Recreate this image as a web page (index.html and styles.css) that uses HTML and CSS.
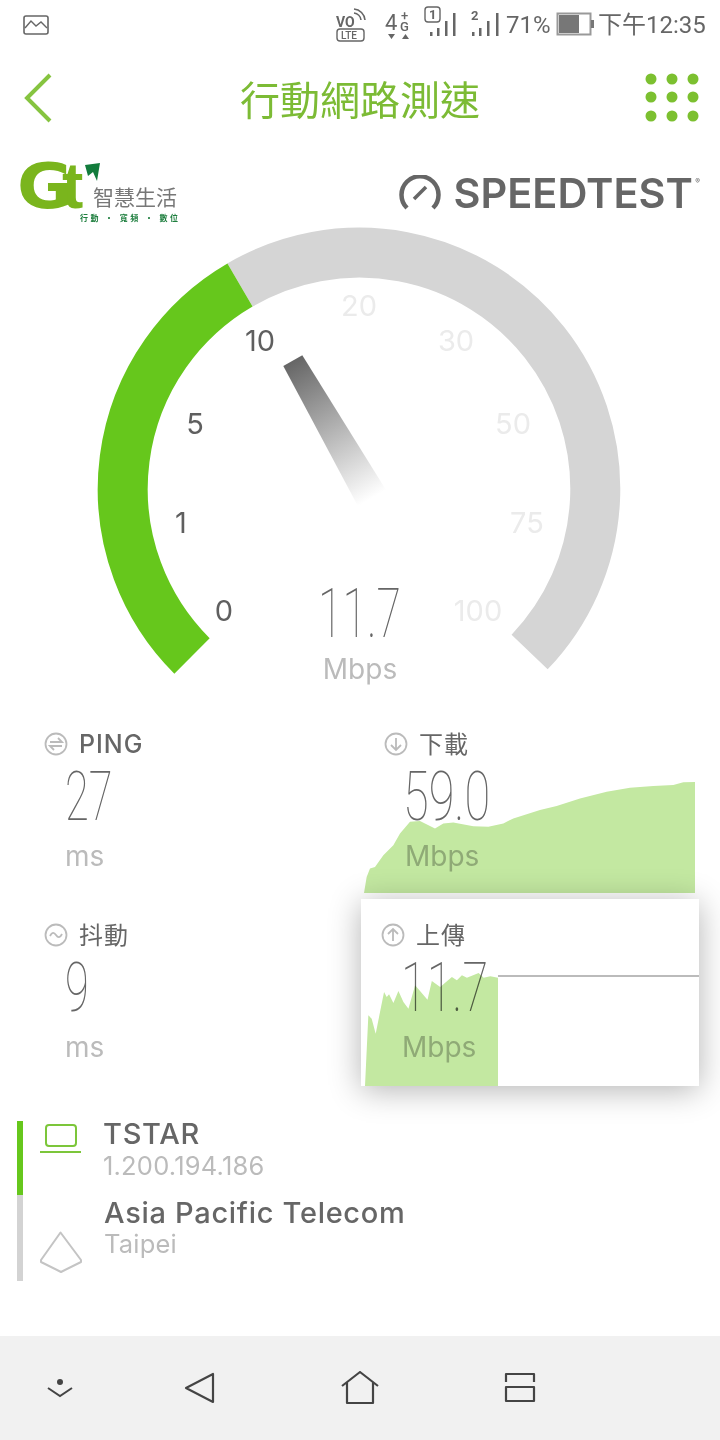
FILE: index.html
```html
<!DOCTYPE html>
<html lang="zh-Hant">
<head>
  <meta charset="UTF-8" />
  <meta name="viewport" content="width=device-width, initial-scale=1" />
  <title>行動網路測速</title>
  <link rel="stylesheet" href="styles.css">
</head>
<body>
  <div class="status-bar">
    <svg class="status-pic" width="26" height="22" viewBox="0 0 26 22">
      <rect x="1" y="2" width="24" height="18" rx="2" fill="none" stroke="#666" stroke-width="1.6"/>
      <path d="M2 14 L8 7 L13 12 L18 8 L24 14" fill="none" stroke="#666" stroke-width="1.4"/>
    </svg>
    <svg class="status-right" width="385" height="50" viewBox="330 0 385 50">
      <!-- volte -->
      <text x="336" y="27" class="st-small">VO</text>
      <path d="M354 13 a8 8 0 0 1 7 7 M354 9 a12 12 0 0 1 11 11" fill="none" stroke="#666" stroke-width="1.6"/>
      <rect x="337" y="29" width="27" height="12" rx="3" fill="none" stroke="#666" stroke-width="1.4"/>
      <text x="341" y="39" class="st-tiny">LTE</text>
      <!-- 4G -->
      <text x="385" y="30" class="st-4g">4</text>
      <text x="400" y="31" class="st-g">G</text>
      <text x="401" y="20" class="st-g">+</text>
      <path d="M388 34 h7 l-3.500 5 z M402 39 h7 l-3.500 -5 z" fill="#666"/>
      <!-- sim 1 -->
      <rect x="425" y="7" width="15" height="15" rx="3" fill="none" stroke="#666" stroke-width="1.400"/>
      <text x="429" y="19" class="st-sim">1</text>
      <g fill="#666">
        <rect x="430" y="32" width="2.500" height="4"/>
        <rect x="437" y="28" width="2.500" height="8"/>
        <rect x="445" y="21" width="2.500" height="15"/>
        <rect x="453" y="13" width="2.500" height="23"/>
      </g>
      <!-- sim 2 -->
      <text x="471" y="20" class="st-sim">2</text>
      <g fill="#666">
        <rect x="472" y="32" width="2.500" height="4"/>
        <rect x="479" y="28" width="2.500" height="8"/>
        <rect x="487" y="21" width="2.500" height="15"/>
        <rect x="496" y="13" width="2.500" height="23"/>
      </g>
      <text x="506" y="33" class="st-time">71%</text>
      <!-- battery -->
      <rect x="557.500" y="13.500" width="33" height="21" fill="none" stroke="#999" stroke-width="2"/>
      <rect x="559" y="15" width="20" height="18" fill="#777"/>
      <rect x="591" y="20" width="3" height="8" fill="#777"/>
      <text x="598" y="33" class="st-time">下午12:35</text>
    </svg>
  </div>

  <div class="top-bar">
    <svg width="32" height="52" viewBox="0 0 32 52">
      <path d="M28 3 L5 26 L28 49" fill="none" stroke="#86c440" stroke-width="4"/>
    </svg>
    <h1 class="page-title">行動網路測速</h1>
    <svg class="grid-icon" width="54" height="50" viewBox="0 0 54 50">
      <g fill="#7cc030">
        <circle cx="6" cy="6" r="5.500"/><circle cx="27" cy="6" r="5.500"/><circle cx="48" cy="6" r="5.500"/>
        <circle cx="6" cy="24" r="5.500"/><circle cx="27" cy="24" r="5.500"/><circle cx="48" cy="24" r="5.500"/>
        <circle cx="6" cy="43" r="5.500"/><circle cx="27" cy="43" r="5.500"/><circle cx="48" cy="43" r="5.500"/>
      </g>
    </svg>
  </div>

  <div class="brand-row">
    <svg class="gt-logo" width="170" height="76" viewBox="15 150 170 76">
      <text x="17" y="208" class="gt-mark" textLength="56" lengthAdjust="spacingAndGlyphs">G</text>
      <text x="62" y="208" class="gt-mark-t">t</text>
      <path d="M85 165 L100 163 L97 181 L93 172 L88 176 Z" fill="#127c3c"/>
      <text x="93" y="205" class="gt-name">智慧生活</text>
      <text x="80" y="221" class="gt-tag" textLength="98">行動 ‧ 寬頻 ‧ 數位</text>
    </svg>
    <div class="speedtest">
      <svg width="42" height="36" viewBox="0 0 42 36">
        <path d="M8 33 A18.500 18.500 0 1 1 34 33" fill="none" stroke="#666" stroke-width="4.500"/>
        <path d="M15 24 L27 12" stroke="#666" stroke-width="3.500"/>
      </svg>
      <span class="speedtest-name">SPEEDTEST</span>
      <span class="speedtest-reg">®</span>
    </div>
  </div>

  <svg class="gauge" width="720" height="503" viewBox="0 222 720 503">
    <defs>
      <linearGradient id="needleFade" gradientUnits="userSpaceOnUse" x1="293" y1="361" x2="372" y2="498">
        <stop offset="0" stop-color="#666"/>
        <stop offset="1" stop-color="#fff"/>
      </linearGradient>
    </defs>
    <path d="M240 285 A236 236 0 0 1 529.600 652" fill="none" stroke="#d5d5d5" stroke-width="50"/>
    <path d="M192 656 A236 236 0 0 1 240 285" fill="none" stroke="#66c71c" stroke-width="50"/>
    <polygon points="283.300,366 302.300,355.300 386,490 358.300,506.700" fill="url(#needleFade)"/>

    <g class="tick tick-on">
      <text x="224" y="621">0</text>
      <text x="181" y="533">1</text>
      <text x="195" y="434">5</text>
      <text x="260" y="351">10</text>
    </g>
    <g class="tick tick-off">
      <text x="359" y="316">20</text>
      <text x="456" y="351">30</text>
      <text x="513" y="434">50</text>
      <text x="527" y="533">75</text>
      <text x="478" y="621">100</text>
    </g>
    <text x="318" y="637" class="gauge-value" textLength="83" lengthAdjust="spacingAndGlyphs">11.7</text>
    <text x="360" y="679" class="gauge-unit">Mbps</text>
  </svg>

  <div class="stats">
    <div class="stat">
      <div class="stat-label">
        <svg width="24" height="24" viewBox="0 0 24 24">
          <circle cx="12" cy="12" r="10.500" class="ring"/>
          <path d="M6 10 H18 L14 6 M18 14 H6 L10 18" class="ring"/>
        </svg>
        <span>PING</span>
      </div>
      <div class="stat-value"><span>27</span></div>
      <div class="stat-unit">ms</div>
    </div>

    <div class="stat stat-down">
      <div class="stat-label">
        <svg width="24" height="24" viewBox="0 0 24 24">
          <circle cx="12" cy="12" r="10.500" class="ring"/>
          <path d="M12 6 V18 M7 13 L12 18 L17 13" class="ring"/>
        </svg>
        <span class="cjk">下載</span>
      </div>
      <div class="stat-value"><span>59.0</span></div>
      <div class="stat-unit">Mbps</div>
      <svg class="chart chart-down" width="331" height="111" viewBox="72 186 993 332" preserveAspectRatio="none">
        <polygon fill="#c3e8a1" points="72,518 80,470 90,445 105,440 130,405 160,375 180,340 210,305 240,303 285,325 310,310 340,307 400,318 445,320 490,310 520,295 600,270 650,258 720,235 800,215 870,203 940,198 1000,195 1030,187 1065,186 1065,518"/>
      </svg>
    </div>

    <div class="stat">
      <div class="stat-label">
        <svg width="24" height="24" viewBox="0 0 24 24">
          <circle cx="12" cy="12" r="10.500" class="ring"/>
          <path d="M6 13 C8 9 10 9 12 12 C14 15 16 15 18 11" class="ring"/>
        </svg>
        <span class="cjk">抖動</span>
      </div>
      <div class="stat-value"><span>9</span></div>
      <div class="stat-unit">ms</div>
    </div>

    <div class="stat stat-up">
      <div class="stat-label">
        <svg width="24" height="24" viewBox="0 0 24 24">
          <circle cx="12" cy="12" r="10.500" class="ring"/>
          <path d="M12 18 V6 M7 11 L12 6 L17 11" class="ring"/>
        </svg>
        <span class="cjk">上傳</span>
      </div>
      <div class="stat-value"><span>11.7</span></div>
      <div class="stat-unit">Mbps</div>
      <svg class="chart chart-up" width="133" height="113" viewBox="75 758 398 339" preserveAspectRatio="none">
        <polygon fill="#c3e8a1" points="75,1097 85,885 95,895 107,940 118,885 132,815 140,830 147,822 160,848 175,812 190,845 205,865 225,795 262,838 275,782 300,800 335,770 350,780 365,765 380,772 415,758 430,772 450,768 473,772 473,1097"/>
      </svg>
      <div class="chart-line"></div>
    </div>
  </div>

  <div class="isp-list">
    <div class="isp isp-client">
      <svg width="44" height="32" viewBox="0 0 44 32">
        <rect x="7" y="2" width="30" height="21" rx="3" fill="none" stroke="#7cc63a" stroke-width="2"/>
        <path d="M1 29 H42" stroke="#7cc63a" stroke-width="2"/>
      </svg>
      <div>
        <div class="isp-name">TSTAR</div>
        <div class="isp-sub">1.200.194.186</div>
      </div>
    </div>
    <div class="isp isp-server">
      <svg width="44" height="42" viewBox="0 0 44 42">
        <path d="M21.500 1.500 L42 29 L42 31 L22 41 L2 31 L2 29 Z" fill="none" stroke="#c4c4c4" stroke-width="2" stroke-linejoin="round"/>
      </svg>
      <div>
        <div class="isp-name">Asia Pacific Telecom</div>
        <div class="isp-sub">Taipei</div>
      </div>
    </div>
  </div>

  <div class="nav-bar">
    <svg width="28" height="24" viewBox="0 0 28 24">
      <circle cx="14" cy="6" r="3" fill="#444"/>
      <path d="M2 12 L14 20 L26 12" fill="none" stroke="#444" stroke-width="2"/>
    </svg>
    <svg width="32" height="32" viewBox="0 0 32 32">
      <path d="M29 2 V30 L2 16 Z" fill="none" stroke="#444" stroke-width="2.200" stroke-linejoin="round"/>
    </svg>
    <svg width="38" height="34" viewBox="0 0 38 34">
      <path d="M1 15 L19 1 L37 15 M6 11 V32 H32 V11" fill="none" stroke="#444" stroke-width="2.200" stroke-linejoin="round"/>
    </svg>
    <svg width="32" height="32" viewBox="0 0 32 32">
      <path d="M2 10 V2 H30 V10 M2 15 H30 V29 H2 Z" fill="none" stroke="#444" stroke-width="2.200" stroke-linejoin="round"/>
    </svg>
  </div>
</body>
</html>
```

FILE: styles.css
```css
html, body { margin: 0; padding: 0; }
body { width: 720px; height: 1440px; background: #fff; font-family: Inter, "Noto Sans CJK TC", sans-serif; position: relative; overflow: hidden; }
svg { display: block; }

.status-bar { height: 50px; display: flex; justify-content: space-between; padding: 0 5px 0 23px; box-sizing: border-box; }
.status-pic { margin-top: 14px; }
.st-small { font: 700 14px "Roboto", sans-serif; fill: #666; }
.st-tiny { font: 500 10px "Roboto", sans-serif; fill: #666; }
.st-4g { font: 400 22px "Roboto", sans-serif; fill: #666; }
.st-g { font: 500 13px "Roboto", sans-serif; fill: #666; }
.st-sim { font: 700 13px "Roboto", sans-serif; fill: #666; }
.st-time { font: 400 24px "Roboto", "Noto Sans CJK TC", sans-serif; fill: #666; }

.top-bar { height: 96px; display: grid; grid-template-columns: 1fr auto 1fr; align-items: center; padding: 0 22px; box-sizing: border-box; }
.page-title { margin: 0; font: 400 40px "Noto Sans CJK TC", sans-serif; color: #7cbb35; }
.grid-icon { justify-self: end; margin-right: -1px; }

.brand-row { height: 76px; display: flex; justify-content: space-between; padding: 0 27px 0 15px; box-sizing: border-box; }
.gt-logo { margin-top: 4px; }
.gt-mark { font: 700 62px "DejaVu Sans", sans-serif; fill: #7ab51d; }
.gt-mark-t { font: 700 64px "Liberation Sans", sans-serif; fill: #7ab51d; }
.gt-name { font: 400 21px "Noto Sans CJK TC", sans-serif; fill: #777; }
.gt-tag { font: 700 8px "Noto Sans CJK TC", sans-serif; fill: #1f7f3f; }
.speedtest { display: flex; align-items: center; gap: 12px; height: 36px; margin-top: 29px; position: relative; }
.speedtest-name { font: 600 41.500px Inter, sans-serif; color: #666; }
.speedtest-reg { position: absolute; right: -7px; top: 2px; font: 400 7px Inter, sans-serif; color: #666; }

.tick text { font: 400 29px Inter, sans-serif; text-anchor: middle; }
.tick-on text { fill: #5f5f5f; }
.tick-off text { fill: #ebebeb; }
.gauge-value { font: 100 68px Roboto, sans-serif; fill: #666; }
.gauge-unit { font: 400 28px Inter, sans-serif; fill: #bbb; text-anchor: middle; }

.stats { display: grid; grid-template-columns: 360px 360px; grid-template-rows: 191px 191px; }
.stat { padding-left: 44px; position: relative; }
.stat-label { display: flex; align-items: center; gap: 11px; height: 38px; font: 500 25px Inter, "Noto Sans CJK TC", sans-serif; color: #666; }
.stat-label span { letter-spacing: 1px; }
.stat-label .cjk { font-weight: 400; font-size: 24px; margin-top: -4px; }
.ring { fill: none; stroke: #bbb; stroke-width: 1.800; }
.stat-value { height: 66px; margin-top: 1px; padding-left: 21px; font: 100 68px/66px Roboto, sans-serif; color: #666; }
.stat-value span { display: inline-block; transform: scaleX(.64); transform-origin: left center; }
.stat-unit { padding-left: 21px; margin-top: 8px; font: 400 28px/36px Inter, sans-serif; color: #bbb; }
.chart { position: absolute; mix-blend-mode: multiply; }

.stat-down { padding-left: 24px; }
.stat-down .stat-unit { padding-left: 21px; }
.stat-down .stat-value { padding-left: 19px; }
.stat-down .stat-value span, .stat-up .stat-value span { transform: scaleX(.69); }
.chart-down { left: 4px; top: 57px; }

.stat-up { padding: 17px 0 0 20px; margin: -17px 21px 0 1px; height: 187px; box-sizing: border-box; background: #fff; box-shadow: 0 4px 30px rgba(0,0,0,.3); z-index: 1; }
.stat-up .stat-unit { padding-left: 21px; }
.stat-up .stat-value { padding-left: 20px; }
.chart-up { left: 4px; top: 74px; }
.chart-line { position: absolute; left: 137px; right: 0; top: 76px; height: 2px; background: #bbb; }

.isp-list { margin: 14px 0 0 17px; }
.isp { border-left: 6px solid #d3d3d3; display: flex; padding-left: 17px; box-sizing: border-box; gap: 21px; }
.isp-client { height: 74px; border-left-color: #66c71c; gap: 20px; }
.isp-client svg { margin-top: 2px; margin-left: -1px; }
.isp-client .isp-name { margin-top: -4px; line-height: 34px; }
.isp-server { height: 86px; }
.isp-server svg { margin-top: 36px; margin-left: -1px; }
.isp-name { font: 500 29px/32px Inter, sans-serif; color: #666; letter-spacing: .7px; }
.isp-sub { font: 400 25.500px/30px Inter, sans-serif; color: #bbb; letter-spacing: .2px; }
.isp-server .isp-name { margin-top: 2px; }

.nav-bar { position: absolute; left: 0; right: 0; bottom: 0; height: 104px; background: #f1f1f1; display: grid; grid-template-columns: 120px 160px 160px 160px; justify-items: center; align-items: center; box-sizing: border-box; }
```
